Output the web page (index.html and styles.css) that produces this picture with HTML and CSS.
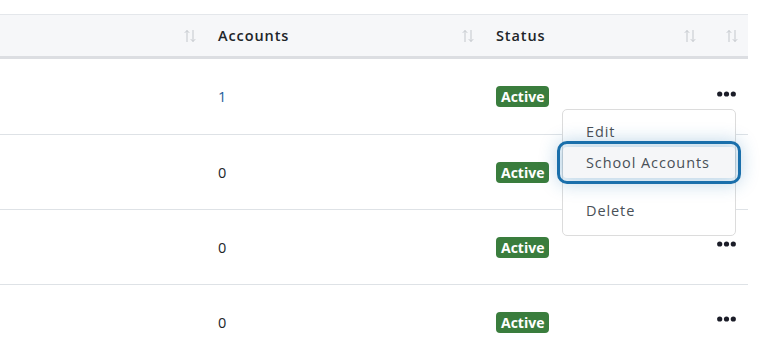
FILE: index.html
```html
<!DOCTYPE html>
<html lang="en">

<head>
    <meta charset="UTF-8">
    <meta name="viewport" content="width=device-width, initial-scale=1.0">
    <title>Schools</title>
    <link rel="stylesheet" href="styles.css">
</head>

<body>

    <div class="table-wrap">
        <table class="data-table">
            <colgroup>
                <col class="col-name">
                <col class="col-accounts">
                <col class="col-status">
                <col class="col-actions">
            </colgroup>
            <thead>
                <tr>
                    <th>
                        <div class="th-inner">
                            <span></span>
                            <svg class="sort-icon" viewBox="0 0 12 14"><path d="M3 13V1.5M0.8 3.8L3 1.5L5.2 3.8M9 1V12.5M6.8 10.2L9 12.5L11.2 10.2" /></svg>
                        </div>
                    </th>
                    <th>
                        <div class="th-inner">
                            <span>Accounts</span>
                            <svg class="sort-icon" viewBox="0 0 12 14"><path d="M3 13V1.5M0.8 3.8L3 1.5L5.2 3.8M9 1V12.5M6.8 10.2L9 12.5L11.2 10.2" /></svg>
                        </div>
                    </th>
                    <th>
                        <div class="th-inner">
                            <span>Status</span>
                            <svg class="sort-icon" viewBox="0 0 12 14"><path d="M3 13V1.5M0.8 3.8L3 1.5L5.2 3.8M9 1V12.5M6.8 10.2L9 12.5L11.2 10.2" /></svg>
                        </div>
                    </th>
                    <th>
                        <div class="th-inner">
                            <span></span>
                            <svg class="sort-icon" viewBox="0 0 12 14"><path d="M3 13V1.5M0.8 3.8L3 1.5L5.2 3.8M9 1V12.5M6.8 10.2L9 12.5L11.2 10.2" /></svg>
                        </div>
                    </th>
                </tr>
            </thead>
            <tbody>
                <tr>
                    <td></td>
                    <td><a class="count-link" href="#">1</a></td>
                    <td><span class="badge">Active</span></td>
                    <td class="actions-cell">
                        <button class="dots-btn"><svg viewBox="0 0 19 6"><circle cx="2.7" cy="3" r="2.6" /><circle cx="9.5" cy="3" r="2.6" /><circle cx="16.3" cy="3" r="2.6" /></svg></button>
                        <ul class="dropdown-menu">
                            <li><a class="dropdown-item" href="#">Edit</a></li>
                            <li><a class="dropdown-item focused" href="#">School Accounts</a></li>
                            <li class="dropdown-divider"></li>
                            <li><a class="dropdown-item" href="#">Delete</a></li>
                        </ul>
                    </td>
                </tr>
                <tr>
                    <td></td>
                    <td>0</td>
                    <td><span class="badge">Active</span></td>
                    <td class="actions-cell">
                        <button class="dots-btn"><svg viewBox="0 0 19 6"><circle cx="2.7" cy="3" r="2.6" /><circle cx="9.5" cy="3" r="2.6" /><circle cx="16.3" cy="3" r="2.6" /></svg></button>
                    </td>
                </tr>
                <tr>
                    <td></td>
                    <td>0</td>
                    <td><span class="badge">Active</span></td>
                    <td class="actions-cell">
                        <button class="dots-btn"><svg viewBox="0 0 19 6"><circle cx="2.7" cy="3" r="2.6" /><circle cx="9.5" cy="3" r="2.6" /><circle cx="16.3" cy="3" r="2.6" /></svg></button>
                    </td>
                </tr>
                <tr>
                    <td></td>
                    <td>0</td>
                    <td><span class="badge">Active</span></td>
                    <td class="actions-cell">
                        <button class="dots-btn"><svg viewBox="0 0 19 6"><circle cx="2.7" cy="3" r="2.6" /><circle cx="9.5" cy="3" r="2.6" /><circle cx="16.3" cy="3" r="2.6" /></svg></button>
                    </td>
                </tr>
            </tbody>
        </table>
    </div>

</body>

</html>
```

FILE: styles.css
```css
:root {
    --text-color: #212529;
    --muted-color: #495057;
    --border-color: #dee2e6;
    --header-bg: #f6f7f9;
    --badge-green: #3a7d3d;
    --link-color: #1d5d9b;
    --focus-color: #1a6fab;
}

* {
    margin: 0;
    padding: 0;
    box-sizing: border-box;
}

body {
    font-family: 'Open Sans', sans-serif;
    font-size: 14.5px;
    letter-spacing: 0.9px;
    color: var(--text-color);
    background-color: #fff;
    overflow: hidden;
}

.table-wrap {
    width: 748px;
    padding-top: 14px;
}

.data-table {
    width: 100%;
    border-collapse: collapse;
    table-layout: fixed;
}

.col-name {
    width: 206px;
}

.col-accounts {
    width: 278px;
}

.col-status {
    width: 222px;
}

.col-actions {
    width: 42px;
}

.data-table thead th {
    background-color: var(--header-bg);
    border-top: 1px solid #e4e7eb;
    border-bottom: 3px solid #dcdee2;
    height: 43px;
    padding: 0 10px 0 12px;
    font-weight: 600;
    text-align: left;
}

.th-inner {
    display: flex;
    justify-content: space-between;
    align-items: center;
}

.sort-icon {
    width: 12px;
    height: 14px;
    fill: none;
    stroke: #c3c7cc;
    stroke-width: 1;
}

.data-table tbody td {
    height: 75px;
    padding: 0 12px;
    border-bottom: 1px solid var(--border-color);
    vertical-align: middle;
}

.data-table tbody tr:first-child td {
    height: 77px;
}

.count-link {
    color: var(--link-color);
    text-decoration: none;
}

.badge {
    display: inline-block;
    background-color: var(--badge-green);
    color: #fff;
    font-weight: 700;
    font-size: 14px;
    letter-spacing: 0;
    line-height: 21px;
    padding: 0 5px;
    border-radius: 4px;
}

.actions-cell {
    position: relative;
}

.data-table tbody td.actions-cell {
    padding: 0 12px 0 0;
}

.dots-btn {
    background: none;
    border: none;
    cursor: pointer;
    display: flex;
    margin: 0 0 6px auto;
}

.dots-btn svg {
    width: 19px;
    height: 6px;
    fill: #1b1d28;
}

.dropdown-menu {
    position: absolute;
    top: 50px;
    right: 12px;
    width: 174px;
    list-style: none;
    background-color: #fff;
    border: 1px solid #dcdcdc;
    border-radius: 5px;
    padding: 6px 0 9px;
    text-align: left;
    z-index: 5;
}

.dropdown-item {
    display: block;
    padding: 0 23px;
    line-height: 31px;
    color: var(--muted-color);
    text-decoration: none;
}

.dropdown-item.focused {
    background-color: #f5f6f8;
    outline: 3px solid var(--focus-color);
    outline-offset: 3px;
    border-radius: 4px;
    box-shadow: 0 0 18px 6px rgba(26, 111, 171, 0.28);
}

.dropdown-divider {
    height: 17px;
}
```
